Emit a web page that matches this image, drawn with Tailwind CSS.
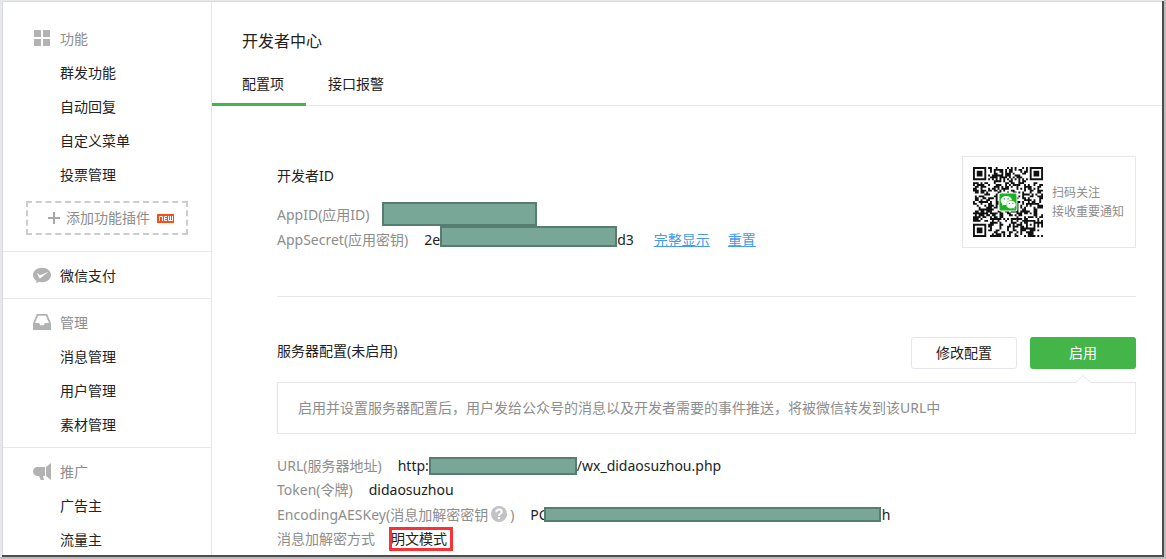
<!DOCTYPE html>
<html lang="zh-CN">
<head>
<meta charset="utf-8">
<meta name="viewport" content="width=device-width, initial-scale=1">
<title>开发者中心</title>
<script src="https://cdn.jsdelivr.net/npm/@tailwindcss/browser@4"></script>
</head>
<body class="flex h-screen overflow-hidden bg-[#e7e8eb] font-['Noto_Sans','Noto_Sans_CJK_SC',sans-serif] text-sm text-[#222222]">
<div class="flex w-full border-r-2 border-b-2 border-[#bdbdbd] pl-0.5 pt-px">
<div class="flex w-full border-r-2 border-b-2 border-[#4d4d4d]">
<div class="flex w-full overflow-hidden border-t border-l border-[#d9dadc] bg-white">

  <nav class="w-[209px] shrink-0 border-r border-[#e7e7eb]" aria-label="主菜单">
    <section class="border-b border-[#e7e7eb] pt-5 pb-4">
      <h2 class="flex h-[34px] items-center pl-[30px] text-[#8d8d8d]">
        <svg class="mr-[9px] h-[18px] w-[18px] shrink-0" viewBox="0 0 18 18" fill="#b2b2b2" aria-hidden="true"><path d="M1 0h7v7H1zM10 0h7v7h-7zM1 9h7v7H1zM10 9h7v7h-7z"/></svg>功能</h2>
      <ul class="leading-[34px]">
        <li><a href="#" class="block pl-[57px]">群发功能</a></li>
        <li><a href="#" class="block pl-[57px]">自动回复</a></li>
        <li><a href="#" class="block pl-[57px]">自定义菜单</a></li>
        <li><a href="#" class="block pl-[57px]">投票管理</a></li>
      </ul>
      <a href="#" class="mx-[23px] mt-[9px] flex h-[34px] items-center border-2 border-dashed border-[#cccccc] pl-5 text-[#8d8d8d]">
        <svg class="mr-[6px] h-3 w-3" viewBox="0 0 12 12" fill="#a8a8a8" aria-hidden="true"><path d="M5 0h2v5h5v2H7v5H5V7H0V5h5z"/></svg>
        添加功能插件
        <svg class="ml-[7px] h-[9px] w-[17px]" viewBox="0 0 17 9" role="img" aria-label="新"><path fill="#ff4c12" d="M0 0h17v9H0z"/><path fill="none" stroke="#fff" d="M2.500 7V2.500h3V7M10 2.500H7.500v4H10M7.500 4.500H10M11.500 2v4.500h4V2M13.500 2v4.500"/></svg>
      </a>
    </section>
    <section class="border-b border-[#e7e7eb] pt-[7px] pb-[5px]">
      <a href="#" class="flex h-[34px] items-center pl-[30px]">
        <svg class="mr-[9px] h-[18px] w-[18px] shrink-0" viewBox="0 0 18 18" aria-hidden="true"><path fill="#b2b2b2" d="M9 .8c5 0 9 3.200 9 7.200s-4 7.300-9 7.300c-1.200 0-2.300-.2-3.300-.5L3.500 16.500 3.300 13.700C1.300 12.400 0 10.300 0 8 0 4 4 .8 9 .8z"/><path fill="#fff" d="M3.800 5.700 7 8.200l8.600-3.500-8.300 6.500c-.4.300-.9.200-1.200-.2z"/></svg>微信支付</a>
    </section>
    <section class="border-b border-[#e7e7eb] pt-[7px] pb-[5px]">
      <h2 class="flex h-[34px] items-center pl-[30px] text-[#8d8d8d]">
        <svg class="mr-[9px] h-[18px] w-[18px] shrink-0" viewBox="0 0 18 18" aria-hidden="true"><path fill="#b2b2b2" fill-rule="evenodd" d="M3.800 0h10.400L18 9.300V16H0V9.300zM5 1.800 2 9h4.200l1 2.200h3.600l1-2.200H16l-3-7.200z"/></svg>管理</h2>
      <ul class="leading-[34px]">
        <li><a href="#" class="block pl-[57px]">消息管理</a></li>
        <li><a href="#" class="block pl-[57px]">用户管理</a></li>
        <li><a href="#" class="block pl-[57px]">素材管理</a></li>
      </ul>
    </section>
    <section class="pt-[7px]">
      <h2 class="flex h-[34px] items-center pl-[30px] text-[#8d8d8d]">
        <svg class="mr-[9px] h-[18px] w-[18px] shrink-0" viewBox="0 0 18 18" fill="#b2b2b2" aria-hidden="true"><path d="M4.500 4H12v9h-2l1 4H7.800L6 13H4.500C2 13 0 11 0 8.500S2 4 4.500 4zM13 4l5-4v17l-5-4z"/></svg>推广</h2>
      <ul class="leading-[34px]">
        <li><a href="#" class="block pl-[57px]">广告主</a></li>
        <li><a href="#" class="block pl-[57px]">流量主</a></li>
      </ul>
    </section>
  </nav>

  <main class="min-w-0 flex-1">
    <header class="border-b border-[#e7e7eb] pt-[27px]">
      <h1 class="pl-[30px] text-base leading-6">开发者中心</h1>
      <nav class="-mb-px mt-[11px] flex leading-[39px]" aria-label="标签">
        <a href="#" class="border-b-3 border-[#44b549] pl-[30px] pr-[22px]">配置项</a>
        <a href="#" class="px-[22px]">接口报警</a>
      </nav>
    </header>

    <div class="pr-[26px] pl-[65px]">
      <section class="flex justify-between border-b border-[#e7e7eb] pt-[50px] pb-11">
        <div class="leading-6">
          <h2 class="mt-2 mb-[15px]">开发者ID</h2>
          <dl>
            <div class="flex h-[25px] gap-3">
              <dt class="text-[#8d8d8d]">AppID(应用ID)</dt>
              <dd class="-mt-px h-6 w-[155px] border-2 border-[#577d70] bg-[#78a797]"></dd>
            </div>
            <div class="flex h-6 gap-4">
              <dt class="text-[#8d8d8d]">AppSecret(应用密钥)</dt>
              <dd class="flex">2e<span class="-mt-[2px] h-[21px] w-[177px] border-2 border-[#577d70] bg-[#78a797]"></span>d3
                <a href="#" class="ml-5 text-[#459ae9] underline">完整显示</a>
                <a href="#" class="ml-[18px] text-[#459ae9] underline">重置</a>
              </dd>
            </div>
          </dl>
        </div>
        <aside class="flex h-[92px] w-[174px] items-center gap-[9px] border border-[#e7e7eb] pl-2.5 text-xs leading-[19px] text-[#8d8d8d]">
          <svg class="h-[70px] w-[70px] shrink-0" viewBox="0 0 37 37" role="img" aria-label="二维码">
            <path id="modules" fill="#111"/>
            <rect x="13.500" y="13.500" width="10" height="10" rx="1" fill="#fff"/>
            <rect x="14" y="14" width="9" height="9" rx=".8" fill="#19b320"/>
            <path fill="#fff" d="M17.600 15.300c1.700 0 3 1 3 2.300-1.900 0-3.200 1-3 2.500-.5 0-.9 0-1.300-.2l-1 .6.300-1c-.6-.4-1-1.100-1-1.900 0-1.300 1.300-2.300 3-2.300z"/>
            <path fill="#fff" d="M20.100 17.900c1.400 0 2.500.9 2.500 2 0 .6-.3 1.100-.8 1.500l.2.800-.9-.5c-.3.100-.6.200-1 .2-1.400 0-2.500-.9-2.500-2s1.100-2 2.500-2z"/>
            <path fill="#19b320" d="M16.200 16.500h.7v.7h-.7zM18.200 16.500h.7v.7h-.7zM19 19h.6v.6H19zM20.700 19h.6v.6h-.6z"/>
          </svg>
          <p>扫码关注<br>接收重要通知</p>
        </aside>
      </section>

      <section class="pt-10">
        <div class="flex items-start justify-between">
          <h2 class="mt-[2px] leading-6">服务器配置(未启用)</h2>
          <div class="flex gap-[13px]">
            <button type="button" class="h-8 w-[106px] rounded-[3px] border border-[#e7e7eb]">修改配置</button>
            <button type="button" class="h-8 w-[106px] rounded-[3px] bg-[#44b549] text-white">启用</button>
          </div>
        </div>
        <p class="relative mt-[13px] border border-[#e7e7eb] px-5 py-[14px] leading-[22px] text-[#8d8d8d]">
          <svg class="absolute -top-2 right-11 h-2 w-4" viewBox="0 0 16 8" aria-hidden="true"><path fill="#fff" stroke="#e7e7eb" d="M0 8 8 .5 16 8"/></svg>
          启用并设置服务器配置后，用户发给公众号的消息以及开发者需要的事件推送，将被微信转发到该URL中
        </p>
        <dl class="mt-5 leading-6">
          <div class="flex h-6 gap-4">
            <dt class="text-[#8d8d8d]">URL(服务器地址)</dt>
            <dd class="flex">http:<span class="mt-[3px] h-[18px] w-[148px] border-2 border-[#577d70] bg-[#78a797]"></span>/wx_didaosuzhou.php</dd>
          </div>
          <div class="flex h-[25px] gap-4">
            <dt class="text-[#8d8d8d]">Token(令牌)</dt>
            <dd>didaosuzhou</dd>
          </div>
          <div class="flex h-6 gap-4">
            <dt class="flex text-[#8d8d8d]">EncodingAESKey(消息加解密密钥<svg class="mx-[3px] mt-[3px] h-4 w-4" viewBox="0 0 16 16" role="img" aria-label="帮助"><circle cx="8" cy="8" r="8" fill="#c2c2c2"/><path fill="none" stroke="#fff" stroke-width="2" d="M5.300 6.200C5.300 4.400 6.400 3.600 8 3.600s2.700.9 2.700 2.300c0 1.900-2.700 1.900-2.700 4"/><path fill="#fff" d="M7 11h2v2H7z"/></svg>)</dt>
            <dd class="flex">PC<span class="-ml-1 mt-[4px] h-[15px] w-[337px] border-2 border-[#577d70] bg-[#78a797]"></span><span class="ml-px">h</span></dd>
          </div>
          <div class="flex h-6 gap-4">
            <dt class="text-[#8d8d8d]">消息加解密方式</dt>
            <dd class="relative">明文模式<span class="absolute -right-1.5 -left-0.5 inset-y-0 border-3 border-[#fa3237]"></span></dd>
          </div>
        </dl>
      </section>
    </div>
  </main>
</div>
</div>
</div>
<script>
  // Builds a 37-module code: three finders, one alignment mark, timing lines and data.
  const n = 37;
  let seed = 20141, d = "";
  const rand = () => (seed = (seed * 1103515245 + 12345) % 2147483648) / 2147483648;
  const ring = (x, y, r) => Math.max(Math.abs(x), Math.abs(y)) === r;
  for (let y = 0; y < n; y++) for (let x = 0; x < n; x++) {
    let on = rand() < 0.52;
    for (const [cx, cy] of [[3, 3], [33, 3], [3, 33]]) {
      const m = Math.max(Math.abs(x - cx), Math.abs(y - cy));
      if (m <= 4) on = m === 3 || m <= 1;
    }
    if (Math.max(Math.abs(x - 30), Math.abs(y - 30)) <= 2) on = !ring(x - 30, y - 30, 1);
    if (y === 6 && x > 7 && x < 29) on = x % 2 === 0;
    if (x === 6 && y > 7 && y < 29) on = y % 2 === 0;
    if (on) d += `M${x} ${y}h1v1h-1z`;
  }
  document.getElementById("modules").setAttribute("d", d);
</script>
</body>
</html>
